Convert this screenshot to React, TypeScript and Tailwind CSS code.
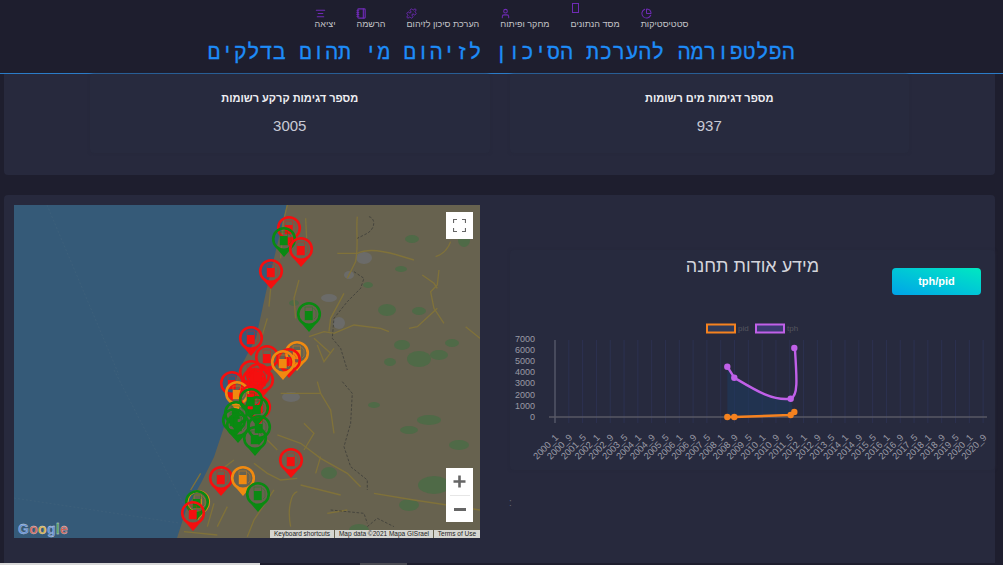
import React from 'react'
import {AlignCenter, ChartPie, Notebook, Puzzle, User} from 'lucide-react'

const navItems = [
  {label: 'יציאה', icon: <AlignCenter size={11} strokeWidth={2.5} />},
  {label: 'הרשמה', icon: <Notebook size={11} strokeWidth={2.5} />},
  {label: 'הערכת סיכון לזיהום', icon: <Puzzle size={11} strokeWidth={2} />},
  {label: 'מחקר ופיתוח', icon: <User size={11} strokeWidth={2.2} />},
  {label: 'מסד הנתונים', icon: <span className="-mt-[5px] ml-[1px] block h-[10px] w-[7px] border border-[#6f2bb5]" />},
  {label: 'סטטיסטיקות', icon: <ChartPie size={11} strokeWidth={2.2} />},
]

const xLabels = [
  '2000_1', '2000_9', '2001_5', '2002_1', '2002_9', '2003_5', '2004_1', '2004_9',
  '2005_5', '2006_1', '2006_9', '2007_5', '2008_1', '2008_9', '2009_5', '2010_1',
  '2010_9', '2011_5', '2012_1', '2012_9', '2013_5', '2014_1', '2014_9', '2015_5',
  '2016_1', '2016_9', '2017_5', '2018_1', '2018_9', '2019_5', '2020_1', '2020_9',
]

const yLabels = [7000, 6000, 5000, 4000, 3000, 2000, 1000, 0]

const RED = '#f50f0f'
const GREEN = '#0a8a12'
const ORANGE = '#f08a10'

// centre of each marker head, in map pixels
const pins: [number, number, string][] = [
  [275, 23, RED], [270, 34, GREEN], [287, 44, RED], [257, 66, RED], [295, 109, GREEN],
  [237, 133, RED], [283, 148, ORANGE], [253, 152, RED], [275, 155, RED], [269, 157, ORANGE],
  [237, 167, RED], [248, 175, RED], [240, 175, RED], [244, 170, RED], [218, 178, RED],
  [223, 188, ORANGE], [237, 192, RED], [245, 202, RED], [237, 195, GREEN], [243, 203, GREEN],
  [222, 208, GREEN], [220, 215, GREEN], [224, 220, GREEN], [245, 222, GREEN], [241, 233, GREEN],
  [277, 255, RED], [207, 273, RED], [229, 273, ORANGE], [244, 289, GREEN], [184, 297, ORANGE],
  [183, 297, GREEN], [179, 308, RED],
]

function Pin({x, y, color}: {x: number; y: number; color: string}) {
  return (
    <g transform={`translate(${x} ${y})`}>
      <circle r={10.8} fill="none" stroke={color} strokeWidth={2.6} />
      <path d="M-9 7.5 Q0 13 9 7.5 L0 18Z" fill={color} />
      <rect x={-4} y={-7} width={7.5} height={13} fill="none" stroke={color} strokeWidth={0.7} opacity={0.6} />
      <rect x={-4} y={-3} width={7.5} height={9} fill={color} />
      <path d="M4.5 -6 L7 -3 L7 3 L5 5" fill="none" stroke={color} strokeWidth={0.7} opacity={0.5} />
    </g>
  )
}

function MapArt() {
  return (
    <svg viewBox="0 0 466 333" className="block h-[333px] w-[466px]">
      <rect width={466} height={333} fill="#355a78" />
      <path d="M33 0 L105 170 M100 165 L170 300 M0 293 L165 318" stroke="#42637c" strokeWidth={0.6} strokeDasharray="2 2" fill="none" />
      <path
        d="M273 0 L262 45 L252 87 L242 133 L225 165 L216 195 L210 222 L200 252 L187 278 L172 305 L163 333 L466 333 L466 0Z"
        fill="#67624f"
      />
      {/* green patches */}
      <g fill="#4f6a47">
        <ellipse cx={398} cy={34} rx={7} ry={4} />
        <ellipse cx={387} cy={64} rx={6} ry={3} />
        <ellipse cx={373} cy={105} rx={9} ry={6} />
        <ellipse cx={405} cy={106} rx={7} ry={4} />
        <ellipse cx={388} cy={140} rx={8} ry={5} />
        <ellipse cx={405} cy={154} rx={12} ry={8} />
        <ellipse cx={438} cy={138} rx={7} ry={4} />
        <ellipse cx={425} cy={150} rx={9} ry={5} />
        <ellipse cx={376} cy={157} rx={6} ry={4} />
        <ellipse cx={450} cy={35} rx={6} ry={7} />
        <ellipse cx={315} cy={268} rx={8} ry={6} />
        <ellipse cx={415} cy={215} rx={12} ry={5} />
        <ellipse cx={395} cy={225} rx={9} ry={4} />
        <ellipse cx={420} cy={280} rx={16} ry={9} />
        <ellipse cx={395} cy={300} rx={10} ry={6} />
        <ellipse cx={345} cy={325} rx={10} ry={6} />
        <ellipse cx={445} cy={240} rx={10} ry={5} />
        <ellipse cx={360} cy={200} rx={6} ry={3} />
        <ellipse cx={280} cy={98} rx={5} ry={3} />
        <ellipse cx={354} cy={80} rx={5} ry={3} />
      </g>
      {/* towns */}
      <g fill="#6b6b69">
        <ellipse cx={350} cy={53} rx={8} ry={6} />
        <ellipse cx={315} cy={93} rx={8} ry={4} />
        <ellipse cx={325} cy={118} rx={6} ry={6} />
        <ellipse cx={277} cy={192} rx={9} ry={5} />
        <ellipse cx={335} cy={70} rx={5} ry={4} />
      </g>
      {/* roads, upper half */}
      <g transform="scale(0.3333)" fill="none" stroke="#80723a" strokeWidth={4}>
        <path d="M820 0 L808 50 L800 160" />
        <path d="M875 40 L878 100" />
        <path d="M1030 35 C1025 80 1035 110 1025 170 L1000 220" />
        <path d="M970 145 L1030 145 C1060 130 1100 135 1150 150 L1200 165" />
        <path d="M1310 110 C1300 140 1280 150 1265 155" />
        <path d="M1225 210 L1260 235 L1270 250 M1275 195 L1270 240 L1250 260 L1260 310 L1290 355" />
        <path d="M1270 310 L1210 365 L1185 370" />
        <path d="M855 225 L840 280 L845 340" />
        <path d="M990 265 L950 340 L945 380" />
        <path d="M885 395 L930 380 L960 385 L1020 360 L1100 370 L1125 380" />
        <path d="M900 400 L950 445 M910 420 L930 470 L960 430" />
        <path d="M770 250 L765 305 M760 340 L745 390" />
        <path d="M1355 365 L1398 400" />
        <path d="M1065 35 C1085 40 1085 70 1060 85 L1030 100" stroke="#3e3e3a" strokeWidth={2.5} strokeDasharray="8 5" />
        <path d="M1020 200 L1050 220 L1040 250 L1000 290 L960 340 L955 400 L980 430 L1000 495" stroke="#3e3e3a" strokeWidth={2.5} strokeDasharray="8 5" />
      </g>
      {/* roads, lower half */}
      <g transform="translate(0 165) scale(0.3333)" fill="none" stroke="#80723a" strokeWidth={4}>
        <path d="M800 70 L920 70 L950 120 L960 190 M910 35 L920 70" />
        <path d="M870 160 L900 190 L870 240" />
        <path d="M790 195 L860 220 L920 265 L1000 310 L1040 350 M920 260 L905 310" />
        <path d="M720 280 L760 310 L800 330 L850 325 M860 345 L980 375" />
        <path d="M850 365 C830 370 820 420 830 470" />
        <path d="M780 360 L720 450 L700 500" />
        <path d="M600 400 L580 470 M640 410 L610 470 M560 310 L530 360 M660 270 L620 300" />
        <path d="M1080 370 L1200 390 L1398 420 M940 430 L1000 420 M510 485 L610 495 M760 210 L790 240" />
        <path d="M985 35 L1015 70 L1010 160 L990 230 L1010 290 L1060 330 L1060 360" stroke="#3e3e3a" strokeWidth={2.5} strokeDasharray="8 5" />
        <path d="M950 420 L1050 430 L1060 460 M1060 470 L1090 445 L1140 470" stroke="#3e3e3a" strokeWidth={2.5} strokeDasharray="8 5" />
      </g>
      {pins.map(([x, y, color], i) => (
        <Pin key={i} x={x} y={y} color={color} />
      ))}
    </svg>
  )
}

function MapPanel() {
  return (
    <div className="relative h-[333px] w-[466px] shrink-0 overflow-hidden">
      <MapArt />
      {/* fullscreen button */}
      <div className="absolute left-[432px] top-[7px] flex h-[27px] w-[27px] items-center justify-center bg-white">
        <svg width={13} height={13} viewBox="0 0 13 13" fill="none" stroke="#666" strokeWidth={1.2}>
          <path d="M0.5 4 V0.5 H4 M9 0.5 H12.5 V4 M12.5 9 V12.5 H9 M4 12.5 H0.5 V9" />
        </svg>
      </div>
      {/* zoom control */}
      <div className="absolute left-[432px] top-[263px] flex h-[54px] w-[27px] flex-col items-center bg-white">
        <div className="flex h-[27px] items-center justify-center">
          <svg width={13} height={13} viewBox="0 0 13 13" fill="#666">
            <path d="M5.2 0.5 H7.8 V5.2 H12.5 V7.8 H7.8 V12.5 H5.2 V7.8 H0.5 V5.2 H5.2Z" />
          </svg>
        </div>
        <div className="h-px w-[20px] bg-[#e6e6e6]" />
        <div className="flex flex-1 items-center justify-center">
          <div className="h-[3px] w-[12px] bg-[#666]" />
        </div>
      </div>
      {/* google logo */}
      <div className="absolute bottom-[1px] left-[4px] text-[14px] font-bold leading-[16px] tracking-[0.3px] [-webkit-text-stroke:0.3px_#d8d8d8] [font-family:'Liberation_Sans',sans-serif]">
        <span className="text-[#5f8fd8]">G</span>
        <span className="text-[#d06055]">o</span>
        <span className="text-[#d8b040]">o</span>
        <span className="text-[#5f8fd8]">g</span>
        <span className="text-[#55a060]">l</span>
        <span className="text-[#d06055]">e</span>
      </div>
      {/* attribution */}
      <div className="absolute bottom-0 right-0 flex h-[8px] gap-px text-[6.5px] leading-[8px] text-[#222] [font-family:'Liberation_Sans',sans-serif]">
        <span className="w-[64px] bg-[#d6d6d2] text-center">Keyboard shortcuts</span>
        <span className="w-[98px] bg-[#d6d6d2] text-center">Map data ©2021 Mapa GISrael</span>
        <span className="w-[46px] bg-[#d6d6d2] text-center">Terms of Use</span>
      </div>
    </div>
  )
}

function Chart() {
  const x0 = 555
  const step = 13.81
  const zero = 417
  return (
    <svg viewBox="510 315 485 155" className="block h-[155px] w-[485px]">
      {xLabels.map((label, i) => (
        <line key={label} x1={x0 + i * step} x2={x0 + i * step} y1={340} y2={423} stroke="#2c3150" strokeWidth={1} />
      ))}
      <line x1={x0} x2={x0} y1={340} y2={423} stroke="#666873" strokeWidth={1} />
      <line x1={549} x2={987} y1={zero} y2={zero} stroke="#585964" strokeWidth={1.5} />

      {/* legend */}
      <rect x={707} y={324.5} width={28} height={8} fill="#2f3a58" stroke="#f5821f" strokeWidth={2} />
      <text x={738} y={331} fontSize={8} fill="#55565f">pid</text>
      <rect x={756} y={324.5} width={28} height={8} fill="#3a3a70" stroke="#c060e8" strokeWidth={2} />
      <text x={787} y={331} fontSize={8} fill="#55565f">tph</text>

      {yLabels.map((v, i) => (
        <text key={v} x={535} y={342 + i * 11.1} fontSize={9} textAnchor="end" fill="#9a9aa5">{v}</text>
      ))}

      {xLabels.map((label, i) => (
        <text
          key={label}
          x={x0 + i * step + 4}
          y={438}
          fontSize={9.3}
          textAnchor="end"
          fill="#9a9aa5"
          transform={`rotate(-45 ${x0 + i * step + 4} 438)`}>
          {label}
        </text>
      ))}

      {/* area under tph */}
      <path
        d="M727.3 366.7 L734.3 377.7 C755 390 772 401 790.7 398.7 L794 417 L727.3 417Z"
        fill="#1d3a5f"
        opacity={0.55}
      />
      <path
        d="M727.3 366.7 L734.3 377.7 C755 390 772 401 790.7 398.7 C798 396 797 380 795 350"
        fill="none"
        stroke="#c060e8"
        strokeWidth={2.4}
      />
      <g fill="#c060e8">
        <circle cx={727.3} cy={366.7} r={3.2} />
        <circle cx={734.3} cy={377.7} r={3.2} />
        <circle cx={790.7} cy={398.7} r={3.2} />
        <circle cx={794.3} cy={348} r={3.2} />
      </g>
      <path d="M727.3 417 L734.3 417 L790.7 415 L794.3 412" fill="none" stroke="#f5821f" strokeWidth={2.4} />
      <g fill="#f5821f">
        <circle cx={727.3} cy={417} r={3.2} />
        <circle cx={734.3} cy={417} r={3.2} />
        <circle cx={790.7} cy={415} r={3.2} />
        <circle cx={794.3} cy={412} r={3.2} />
      </g>
    </svg>
  )
}

export default function App() {
  return (
    <div className="flex h-[565px] w-[1003px] flex-col overflow-hidden bg-[#1e1e2e] [font-family:'Liberation_Sans',sans-serif]">
      {/* Header */}
      <header className="h-[74px] shrink-0 border-b border-[#2b7cc8]">
        <nav className="flex justify-center gap-[21px] pt-[8px]">
          {navItems.map(item => (
            <div key={item.label} className="flex h-[22px] flex-col items-start justify-between text-[#6f2bb5]">
              <span className="flex h-[11px] items-start leading-none">{item.icon}</span>
              <span dir="rtl" className="text-[9px] leading-[11px] text-[#c4c4c8]">{item.label}</span>
            </div>
          ))}
        </nav>
        <h1
          dir="rtl"
          className="mt-[11px] text-center text-[21px] leading-[26px] tracking-[0.45px] text-[#1d8cf8] [-webkit-text-stroke:0.3px_#1d8cf8] [font-family:'Liberation_Mono',monospace]">
          הפלטפורמה להערכת הסיכון לזיהום מי תהום בדלקים
        </h1>
      </header>

      {/* Totals */}
      <section className="mx-[4px] flex h-[101px] w-[991px] shrink-0 gap-[20px] rounded-b-[4px] bg-[#27293d] px-[86px]">
        {['מספר דגימות קרקע רשומות|3005', 'מספר דגימות מים רשומות|937'].map(row => {
          const [title, value] = row.split('|')
          return (
            <div key={title} className="flex h-[79px] flex-1 flex-col items-center rounded-[4px] bg-[#272a3e] pt-[17px] shadow-[0_0_3px_#26283b]">
              <div dir="rtl" className="text-[11px] font-bold leading-[14px] text-[#eeeef2]">{title}</div>
              <div className="mt-[12px] text-[15px] leading-[18px] text-[#c9cbd6]">{value}</div>
            </div>
          )
        })}
      </section>

      {/* Map and station info */}
      <section className="mx-[4px] mt-[20px] flex h-[368px] w-[991px] shrink-0 rounded-t-[4px] bg-[#27293d] pl-[10px] pt-[10px]">
        <MapPanel />
        <div className="relative flex-1 pl-[30px] pt-[45px]">
          <div className="h-[220px] rounded-[4px] bg-[#272a3e] shadow-[0_0_3px_#26283b]">
            <div className="grid grid-cols-[1fr_auto_1fr]">
              <div />
              <h2 dir="rtl" className="mt-[5px] text-[18px] leading-[22px] text-[#d4d5dc]">מידע אודות תחנה</h2>
              <div className="flex justify-end pr-[14px] pt-[18px]">
                <button className="h-[27px] w-[89px] rounded-[4px] bg-gradient-to-tr from-[#00a3e8] to-[#00e8c0] text-[11px] font-bold text-white">
                  tph/pid
                </button>
              </div>
            </div>
            <div className="mt-[20px]">
              <Chart />
            </div>
          </div>
          <div className="-ml-[1px] mt-[28px] text-[10px] leading-[10px] text-[#66687a]">:</div>
        </div>
      </section>

      {/* Bottom edge of the window */}
      <div className="flex h-[2px] shrink-0">
        <div className="w-[260px] bg-[#d8d8d8]" />
        <div className="w-[100px]" />
        <div className="w-[47px] bg-[#4a4a52]" />
      </div>
    </div>
  )
}
